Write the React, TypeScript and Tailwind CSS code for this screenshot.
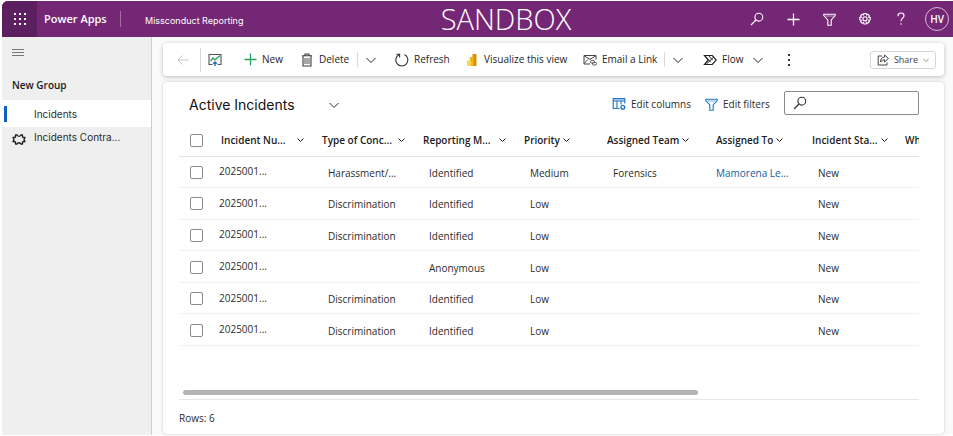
import type { ReactNode } from "react";

type IconProps = { className?: string };

const Svg = ({ className = "", box = 16, children }: { className?: string; box?: number; children: ReactNode }) => (
  <svg viewBox={`0 0 ${box} ${box}`} className={`shrink-0 ${className}`} fill="none" stroke="currentColor" aria-hidden="true">
    {children}
  </svg>
);

const ChevronDown = ({ className = "size-[10px]" }: IconProps) => (
  <Svg box={10} className={className}>
    <path d="M.5 3 5 7.500 9.500 3" strokeWidth="1" />
  </Svg>
);

const SmallChevron = ({ className = "size-[7px]" }: IconProps) => (
  <Svg box={7} className={className}>
    <path d="M.5 1.500 3.500 4.500 6.500 1.500" strokeWidth="1" />
  </Svg>
);

const SearchIcon = ({ className = "size-[14px]" }: IconProps) => (
  <Svg box={14} className={className}>
    <circle cx="8.800" cy="5.200" r="3.900" strokeWidth="1.100" />
    <path d="M6 8 1 13" strokeWidth="1.200" />
  </Svg>
);

const FilterIcon = ({ className = "size-[13px]" }: IconProps) => (
  <Svg box={13} className={className}>
    <path d="M.8 1.200h11.400v1.300L8.200 7v5.200H4.800V7L.8 2.500z" strokeWidth="1.100" />
    <path d="M2.500 3h8" strokeWidth=".6" />
  </Svg>
);

const GearIcon = () => (
  <Svg box={14} className="size-[14px]">
    <path
      d="M5.900 1.500h2.200l.4 1.500 1.300-.8 1.600 1.600-.8 1.300 1.600.4v2.400l-1.600.4.8 1.400-1.600 1.500-1.300-.8-.4 1.600H5.900l-.4-1.600-1.300.8-1.600-1.500.8-1.400-1.600-.4V5.500l1.600-.4-.8-1.300 1.600-1.600 1.300.8z"
      strokeWidth="1.100"
    />
    <circle cx="7" cy="6.800" r="2.100" strokeWidth="1.100" />
  </Svg>
);

const PlusIcon = ({ className = "size-[13px]" }: IconProps) => (
  <Svg box={13} className={className}>
    <path d="M6.500.5v12M.5 6.500h12" strokeWidth="1.300" />
  </Svg>
);

const HelpIcon = () => (
  <Svg box={14} className="size-[14px]">
    <path d="M4 4.200C4 2 5.300 1 7 1s3 1 3 2.700C10 6 7 6.300 7 9.200" strokeWidth="1.200" />
    <circle cx="7" cy="12" r=".8" fill="currentColor" stroke="none" />
  </Svg>
);

const BackIcon = () => (
  <Svg box={12} className="size-3 text-[#c4c4c4]">
    <path d="M11.500 6H1M5.500 1.500 1 6l4.500 4.500" strokeWidth="1" />
  </Svg>
);

const ShowChartIcon = () => (
  <Svg box={14} className="size-[14px]">
    <path d="M4.500 11.500H1v-10h12v10H9.500" stroke="#555" strokeWidth="1.100" />
    <path d="m2.500 8 2.500-3 2 2 2-2 3-2.200" stroke="#2aa35a" strokeWidth="1.200" />
    <path d="M7 13V9.500M5.200 10.800 7 9l1.800 1.800" stroke="#1d6fc4" strokeWidth="1.400" />
  </Svg>
);

const TrashIcon = () => (
  <Svg box={14} className="size-[14px] text-[#3b3b3b]">
    <path d="M2 2.800h10M5 2.600V1h4v1.600M3 3v10h8V3" strokeWidth="1.100" />
    <path d="M5 5v6M7 5v6M9 5v6" strokeWidth=".9" />
  </Svg>
);

const RefreshIcon = () => (
  <Svg box={14} className="size-[14px] text-[#333]">
    <path d="M4.300 1.500A6 6 0 1 0 9.500 1.600" strokeWidth="1.100" />
    <path d="M1.300 1.300h3.300v3.300" strokeWidth="1.100" />
  </Svg>
);

const PowerBiIcon = () => (
  <Svg box={14} className="size-[14px]">
    <rect x="7.500" y="1" width="4" height="12" rx=".6" fill="#d99000" stroke="none" />
    <rect x="4.800" y="4" width="4" height="9" rx=".6" fill="#efb11c" stroke="none" />
    <rect x="2" y="7.500" width="4" height="5.500" rx=".6" fill="#ffd84a" stroke="none" />
  </Svg>
);

const MailLinkIcon = () => (
  <Svg box={14} className="size-[14px] text-[#444]">
    <path d="M7 11H1V2.500h12v4M1 2.800l6 3.500 6-3.500M1 10.500l4-4" strokeWidth="1" />
    <rect x="7.500" y="7.500" width="4" height="2.500" rx="1.200" strokeWidth=".9" />
    <rect x="9.500" y="9.500" width="4" height="2.500" rx="1.200" strokeWidth=".9" />
  </Svg>
);

const FlowIcon = () => (
  <Svg box={14} className="size-[14px] text-[#222]">
    <path d="M1.500 2.500h7.800L13.300 7l-4 4.500H1.500L5.300 7z" strokeWidth="1.200" />
    <path d="M2 2.800 7.500 9M5.500 2.500 9.500 7M3.500 11 11 3.800" strokeWidth="1" />
  </Svg>
);

const ShareIcon = () => (
  <Svg box={12} className="size-3">
    <path d="M5 2H1.200v9H10V8.500" strokeWidth="1" />
    <path d="M7.500 1v2C4.800 3.200 3.600 5 3.500 8c1-1.500 2.200-2.200 4-2.200V8l4-3.500z" strokeWidth="1" />
  </Svg>
);

const EditColumnsIcon = () => (
  <Svg box={14} className="size-[14px] text-[#1f74c4]">
    <path d="M7.500 11.500H1.200v-10h11.600v5M1.200 4h11.600M5 4v7.500M9 4v3.500" strokeWidth="1.100" />
    <path d="M1.200 2.700h11.600" strokeWidth="1.400" opacity=".4" />
    <circle cx="10.800" cy="10.300" r="1.900" strokeWidth="1.300" />
  </Svg>
);

const PuzzleIcon = () => (
  <Svg box={14} className="size-[14px] text-[#1b1b1b]">
    <path
      d="M3.500 3h1.700c.3 1.700 3.300 1.700 3.600 0h1.700v2.200l2.500.3c-1.300 1.300-1.300 2.700 0 4l-2.500.3V12H8.800c-.3-1.700-3.300-1.700-3.600 0H3.500V9.800L1 9.500c1.300-1.300 1.300-2.700 0-4l2.500-.3z"
      strokeWidth="1.300"
      strokeLinejoin="round"
    />
  </Svg>
);

const Divider = ({ className = "h-[15px]" }: IconProps) => <span className={`w-px shrink-0 bg-[#d9d9d9] ${className}`} />;

const columns = [
  { label: "Incident Nu...", width: "w-[101px]", spread: true },
  { label: "Type of Conc...", width: "w-[101px]", spread: true },
  { label: "Reporting M...", width: "w-[101px]", spread: true },
  { label: "Priority", width: "w-[83px]", spread: false },
  { label: "Assigned Team", width: "w-[109px]", spread: false },
  { label: "Assigned To", width: "w-[96px]", spread: false },
  { label: "Incident Sta...", width: "w-[93px]", spread: true },
];

const rows = [
  { type: "Harassment/...", method: "Identified", priority: "Medium", team: "Forensics", owner: "Mamorena Le..." },
  { type: "Discrimination", method: "Identified", priority: "Low", team: "", owner: "" },
  { type: "Discrimination", method: "Identified", priority: "Low", team: "", owner: "" },
  { type: "", method: "Anonymous", priority: "Low", team: "", owner: "" },
  { type: "Discrimination", method: "Identified", priority: "Low", team: "", owner: "" },
  { type: "Discrimination", method: "Identified", priority: "Low", team: "", owner: "" },
];

const Tick = ({ label }: { label: string }) => (
  <input
    type="checkbox"
    aria-label={label}
    className="ml-[11px] block size-[13px] appearance-none rounded-[2px] border border-[#8a8a8a] bg-white"
  />
);

function TopBar() {
  const cell = "flex w-9 items-center justify-center";
  return (
    <header className="flex h-9 items-stretch rounded-tl-md bg-[#742774] text-white">
      <button aria-label="App launcher" className="flex w-[35px] items-center justify-center rounded-tl-md bg-[#5c2060]">
        <svg viewBox="0 0 12 12" className="size-3" fill="white" aria-hidden="true">
          {[0, 5, 10].map((y) => [0, 5, 10].map((x) => <rect key={`${x}-${y}`} x={x} y={y} width="2" height="2" />))}
        </svg>
      </button>
      <div className="flex items-center whitespace-nowrap">
        <a href="#home" className="w-[83px] pt-px pl-[7px] text-[11px] font-semibold">Power Apps</a>
        <span className="h-4 w-px bg-[#a06fa0]" />
        <a href="#app" className="w-[120px] pt-[3px] pl-6 font-[Inter,sans-serif] text-[9px]">Missconduct Reporting</a>
      </div>
      <p className="flex-1 pl-8 text-center text-[29px] leading-9 font-light">SANDBOX</p>
      <nav className="flex items-stretch">
        <button aria-label="Search" className={cell}><SearchIcon /></button>
        <button aria-label="Create" className={cell}><PlusIcon /></button>
        <button aria-label="Filter" className={cell}><FilterIcon /></button>
        <button aria-label="Settings" className={cell}><GearIcon /></button>
        <button aria-label="Help" className={cell}><HelpIcon /></button>
        <button aria-label="Account" className="flex w-[34px] items-center justify-end pr-1">
          <span className="flex size-6 items-center justify-center rounded-full border border-[#d5bcd5] text-[10px] font-semibold">HV</span>
        </button>
      </nav>
    </header>
  );
}

function Sidebar() {
  return (
    <nav className="w-[150px] shrink-0 border-r border-[#cfcfcf] bg-[#efefef] text-[#2b2b2b]">
      <button aria-label="Collapse navigation" className="mt-3 ml-[10px] flex h-[7px] w-3 flex-col justify-between">
        <span className="h-px w-full bg-[#777]" />
        <span className="h-px w-full bg-[#777]" />
        <span className="h-px w-full bg-[#777]" />
      </button>
      <h2 className="mt-[19px] pl-[10px] text-[10px] leading-5 font-semibold text-[#1b1b1b]">New Group</h2>
      <div className="mt-[5px] font-[Inter,sans-serif] text-[10px]">
        <a href="#incidents" className="flex h-[27px] items-center bg-white pl-[2px]">
          <span className="h-4 w-[3px] bg-[#0f5fc0]" />
          <span className="pt-[2px] pl-[27px]">Incidents</span>
        </a>
        <a href="#contraventions" className="flex h-6 items-center pl-[10px]">
          <PuzzleIcon />
          <span className="pb-1 pl-2">Incidents Contra...</span>
        </a>
      </div>
    </nav>
  );
}

function CommandBar() {
  const item = "flex shrink-0 items-center gap-[5px] whitespace-nowrap";
  return (
    <div className="flex h-[33px] items-center rounded bg-white pr-2 pl-[14px] text-[10px] text-[#242424] shadow-[0_1px_4px_rgba(0,0,0,0.25)]">
      <button aria-label="Back" className="w-[23px] shrink-0"><BackIcon /></button>
      <Divider className="h-6" />
      <button aria-label="Show chart" className="w-[43px] shrink-0 pl-[7px]"><ShowChartIcon /></button>
      <button className={`${item} w-[56px]`}><PlusIcon className="size-[13px] text-[#2aa35a]" />New</button>
      <button className={`${item} w-[57px]`}><TrashIcon />Delete</button>
      <Divider />
      <button aria-label="More delete options" className="w-[37px] shrink-0 pl-2"><ChevronDown /></button>
      <button className={`${item} w-[70px]`}><RefreshIcon />Refresh</button>
      <button className={`${item} w-[118px]`}><PowerBiIcon />Visualize this view</button>
      <button className={`${item} w-[81px]`}><MailLinkIcon />Email a Link</button>
      <Divider />
      <button aria-label="More email options" className="w-[38px] shrink-0 pl-2"><ChevronDown /></button>
      <button className={`${item} w-[78px]`}>
        <FlowIcon />
        <span className="w-[26px] text-left">Flow</span>
        <ChevronDown />
      </button>
      <button aria-label="More commands" className="flex h-4 w-4 shrink-0 flex-col items-center justify-center gap-[3px]">
        <span className="size-[2px] bg-[#333]" />
        <span className="size-[2px] bg-[#333]" />
        <span className="size-[2px] bg-[#333]" />
      </button>
      <button className="ml-auto flex h-[18px] w-[66px] items-center justify-center gap-[5px] rounded-[3px] border border-[#d6d6d6] text-[9px] text-[#444]">
        <ShareIcon />
        Share
        <ChevronDown className="size-[6px]" />
      </button>
    </div>
  );
}

function IncidentGrid() {
  return (
    <section className="flex flex-1 flex-col rounded bg-white pr-[25px] pl-4 text-[10px] text-[#2b2b2b] shadow-[0_0_3px_rgba(0,0,0,0.22)]">
      <div className="flex items-center pt-2 pl-[10px]">
        <h1 className="w-[140px] pt-[5px] font-[Inter,sans-serif] text-[14px] leading-5 text-[#111]">Active Incidents</h1>
        <button aria-label="Change view" className="pt-[5px]"><ChevronDown /></button>
        <div className="ml-auto flex items-center">
          <button className="flex w-[93px] items-center gap-[5px] pt-[3px] whitespace-nowrap"><EditColumnsIcon />Edit columns</button>
          <button className="flex w-[79px] items-center gap-[5px] pt-[3px] whitespace-nowrap">
            <FilterIcon className="size-[13px] text-[#1f74c4]" />Edit filters
          </button>
          <label className="flex h-6 w-[135px] items-center rounded-[2px] border border-[#8a8a8a] pl-2 text-[#333]">
            <SearchIcon />
            <input type="search" aria-label="Search this view" className="w-full min-w-0 bg-transparent pl-1 outline-none" />
          </label>
        </div>
      </div>
      <table className="mt-[9px] h-[222px] w-full table-fixed border-collapse text-left whitespace-nowrap">
        <thead>
          <tr className="h-[32px] border-b border-[#e3e3e3]">
            <th className="w-[37px] p-0 pt-px"><Tick label="Select all rows" /></th>
            {columns.map((c) => (
              <th key={c.label} className={`p-0 pl-[5px] font-semibold text-[#1b1b1b] ${c.width}`}>
                <button className={`flex w-full items-center gap-[3px] pt-[2px] ${c.spread ? "justify-between pr-[13px]" : ""}`}>
                  {c.label}
                  <SmallChevron />
                </button>
              </th>
            ))}
            <th className="overflow-hidden p-0 pt-[2px] pl-[5px] font-semibold text-[#1b1b1b]">Wh</th>
          </tr>
        </thead>
        <tbody>
          {rows.map((r, i) => (
            <tr key={i} className="border-b border-[#f1f1f1]">
              <td className="p-0 pt-px"><Tick label={`Select row ${i + 1}`} /></td>
              <td className="p-0 pl-[3px]">2025001...</td>
              <td className="p-0 pt-[3px] pl-[11px]">{r.type}</td>
              <td className="p-0 pt-[3px] pl-[11px]">{r.method}</td>
              <td className="p-0 pt-[3px] pl-[11px]">{r.priority}</td>
              <td className="p-0 pt-[3px] pl-[11px]">{r.team}</td>
              <td className="p-0 pt-[3px] pl-[5px]">{r.owner && <a href="#owner" className="text-[#115ea3]">{r.owner}</a>}</td>
              <td className="p-0 pt-[3px] pl-[11px]">New</td>
              <td className="p-0" />
            </tr>
          ))}
        </tbody>
      </table>
      <div className="mt-auto border-b border-[#e6e6e6] pb-1 pl-1">
        <div className="h-[5px] w-[70%] rounded-full bg-[#b3b3b3]" />
      </div>
      <p className="pt-[9px] pb-[7px] leading-[18px]">Rows: 6</p>
    </section>
  );
}

export default function App() {
  return (
    <div className="flex h-screen flex-col bg-white pt-px pb-px pl-[2px] font-['Open_Sans','Noto_Sans',sans-serif]">
      <TopBar />
      <div className="flex min-h-0 flex-1">
        <Sidebar />
        <main className="flex min-w-0 flex-1 flex-col gap-[6px] bg-[#fafafa] pt-[6px] pr-[9px] pb-px pl-[11px]">
          <CommandBar />
          <IncidentGrid />
        </main>
      </div>
    </div>
  );
}
